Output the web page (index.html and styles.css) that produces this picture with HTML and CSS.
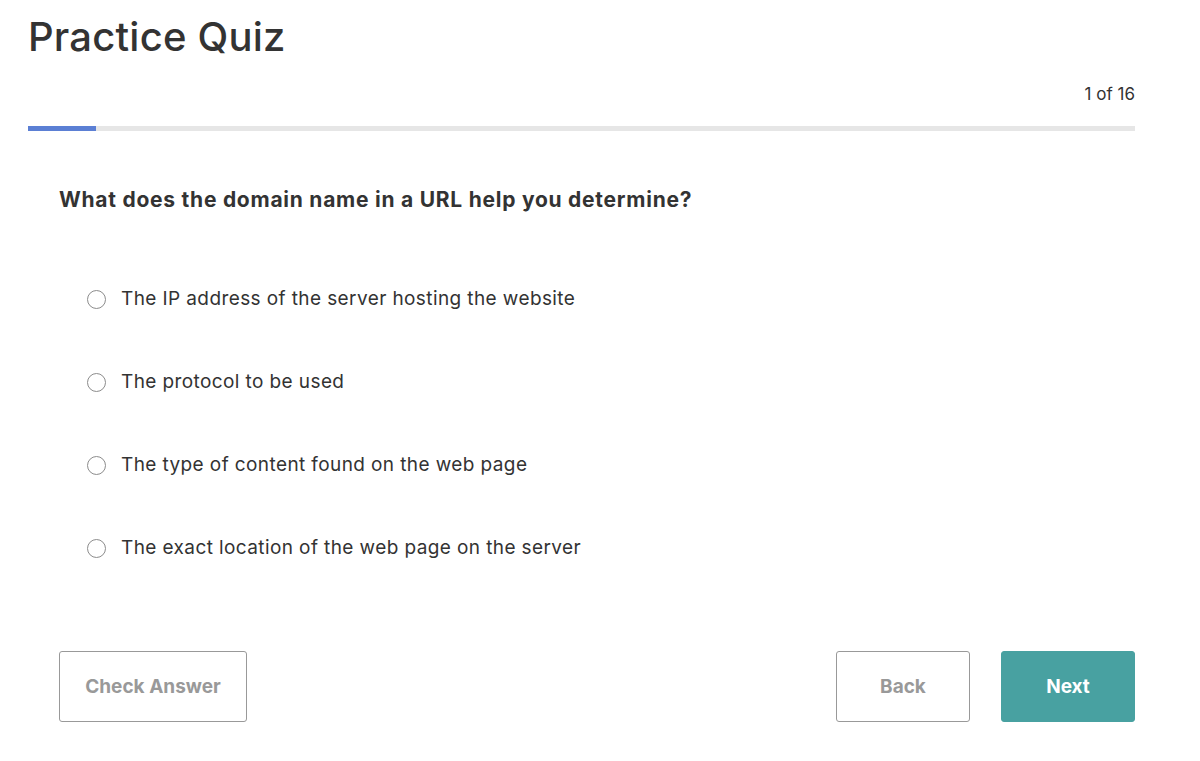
FILE: index.html
```html
<!DOCTYPE html>
<html lang="en">

<head>
    <meta charset="UTF-8">
    <meta name="viewport" content="width=device-width, initial-scale=1.0">
    <title>Practice Quiz</title>
    <link rel="stylesheet" href="styles.css">
</head>

<body>
    <div class="quiz">
        <h1 class="quiz-title">Practice Quiz</h1>

        <div class="quiz-count">1 of 16</div>
        <div class="progress">
            <div class="progress-fill" style="width: 68px;"></div>
        </div>

        <div class="question">
            <h2 class="question-text">What does the domain name in a URL help you determine?</h2>

            <div class="options">
                <label class="option">
                    <span class="radio"></span>
                    <span>The IP address of the server hosting the website</span>
                </label>
                <label class="option">
                    <span class="radio"></span>
                    <span>The protocol to be used</span>
                </label>
                <label class="option">
                    <span class="radio"></span>
                    <span>The type of content found on the web page</span>
                </label>
                <label class="option">
                    <span class="radio"></span>
                    <span>The exact location of the web page on the server</span>
                </label>
            </div>

            <div class="actions">
                <button class="btn btn-outline btn-check">Check Answer</button>
                <div class="nav-buttons">
                    <button class="btn btn-outline btn-nav">Back</button>
                    <button class="btn btn-primary btn-nav">Next</button>
                </div>
            </div>
        </div>
    </div>
</body>

</html>
```

FILE: styles.css
```css
body {
    margin: 0;
    font-family: Inter, "Open Sans", sans-serif;
    color: #333;
    background: #fff;
}

.quiz {
    width: 1107px;
    margin-left: 28px;
}

.quiz-title {
    margin: 0;
    padding-top: 14px;
    font-size: 40px;
    font-weight: 500;
    line-height: 46px;
    letter-spacing: 0.2px;
    color: #333;
}

.quiz-count {
    text-align: right;
    margin-top: 24px;
    font-size: 17px;
    line-height: 20px;
}

.progress {
    margin-top: 22px;
    height: 5px;
    background: #e6e6e6;
}

.progress-fill {
    height: 100%;
    background: #5b7fd4;
}

.question {
    padding-left: 31px;
}

.question-text {
    margin: 56px 0 0;
    font-size: 21px;
    font-weight: 700;
    line-height: 26px;
    letter-spacing: 0.75px;
}

.options {
    display: flex;
    flex-direction: column;
    gap: 59px;
    margin-top: 74px;
    padding-left: 28px;
}

.option {
    display: flex;
    align-items: center;
    gap: 15px;
    font-size: 19px;
    line-height: 24px;
    letter-spacing: 0.4px;
    cursor: pointer;
}

.radio {
    width: 17px;
    height: 17px;
    border: 1.5px solid #8c8c8c;
    border-radius: 50%;
    flex-shrink: 0;
}

.actions {
    display: flex;
    justify-content: space-between;
    margin-top: 91px;
}

.nav-buttons {
    display: flex;
    gap: 31px;
}

.btn {
    height: 71px;
    border-radius: 3px;
    font-family: inherit;
    font-size: 19px;
    font-weight: 700;
    cursor: pointer;
}

.btn-outline {
    background: #fff;
    border: 1.5px solid #999;
    color: #999;
}

.btn-check {
    width: 188px;
}

.btn-nav {
    width: 134px;
}

.btn-primary {
    background: #48a1a1;
    border: 1.5px solid #48a1a1;
    color: #fff;
}
```
